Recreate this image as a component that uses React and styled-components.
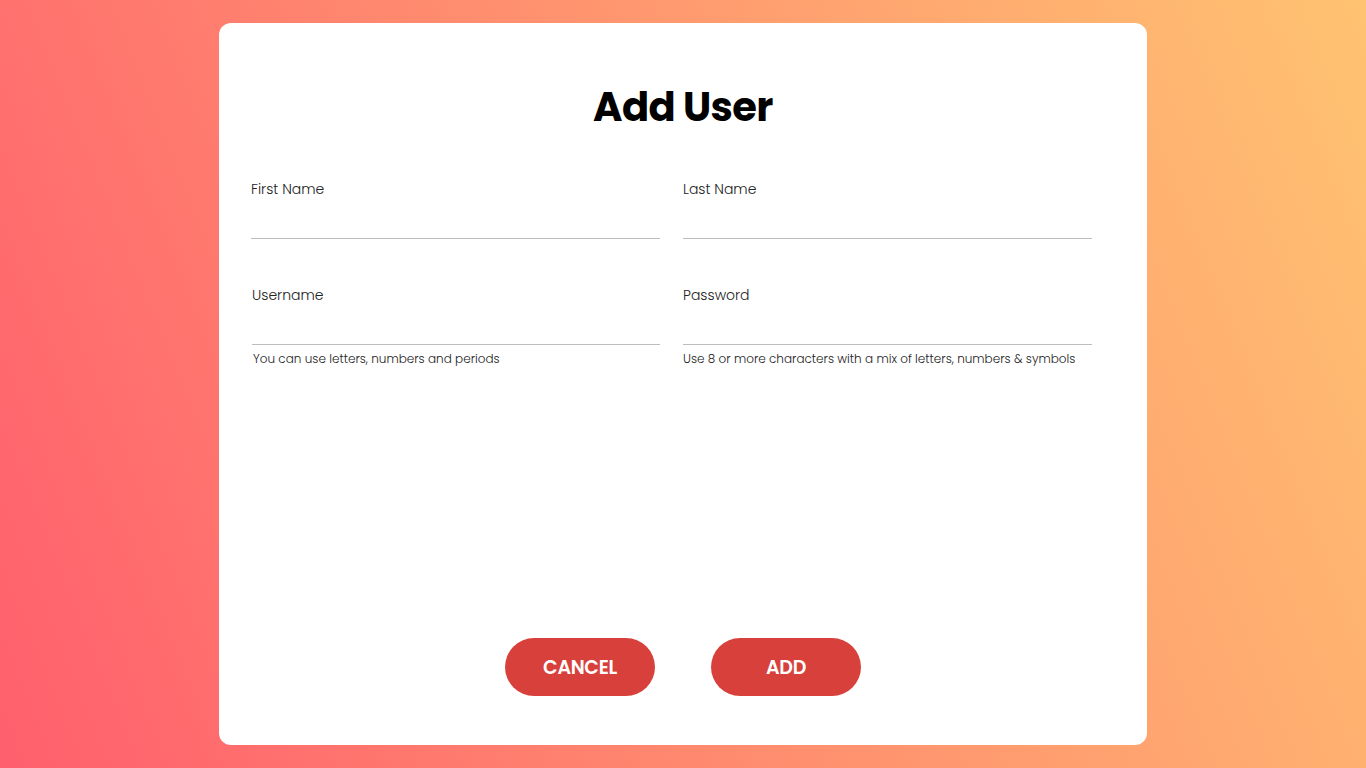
import React from 'react';
import styled, { createGlobalStyle } from 'styled-components';

const GlobalStyle = createGlobalStyle`
  html, body {
    margin: 0;
    padding: 0;
    height: 100%;
  }
  body {
    font-family: "Poppins", "Open Sans", "Noto Sans", sans-serif;
  }
`;

const Page = styled.div`
  width: 100vw;
  height: 100vh;
  box-sizing: border-box;
  padding: 23px 0;
  display: flex;
  justify-content: center;
  background: linear-gradient(68deg, #ff5f6d 0%, #ffc371 100%);
`;

const Card = styled.form`
  width: 928px;
  box-sizing: border-box;
  background: #fff;
  border-radius: 12px;
  padding: 54px 32px 49px;
  display: flex;
  flex-direction: column;
`;

const Title = styled.h1`
  margin: 0 0 42px;
  text-align: center;
  font-size: 40px;
  line-height: 60px;
  font-weight: 700;
  color: #000;
  letter-spacing: -0.6px;
`;

const Fields = styled.div`
  display: grid;
  grid-template-columns: 409px 409px;
  column-gap: 23px;
  row-gap: 46px;
`;

const Field = styled.label`
  display: flex;
  flex-direction: column;
  margin-left: ${(p) => p.$shift || 0}px;
`;

const Label = styled.span`
  font-size: 14px;
  font-weight: 300;
  color: #222;
  line-height: 20px;
`;

const Input = styled.input`
  border: 0;
  border-bottom: 1px solid #bdbdbd;
  outline: none;
  background: none;
  height: 39px;
  padding: 0;
  font: inherit;
`;

const Hint = styled.span`
  margin-top: 8px;
  padding-left: ${(p) => p.$indent || 0}px;
  font-size: 12px;
  font-weight: 300;
  color: #222;
  line-height: 12px;
`;

const Actions = styled.div`
  margin-top: auto;
  display: flex;
  justify-content: center;
  gap: 56px;
`;

const Button = styled.button`
  width: 150px;
  height: 58px;
  border: 0;
  border-radius: 29px;
  background: #d8413b;
  color: #fff;
  font-family: inherit;
  font-size: 19px;
  font-weight: 600;
  letter-spacing: -0.3px;
  cursor: pointer;
`;

export default function App() {
  return (
    <>
      <GlobalStyle />
      <Page>
        <Card onSubmit={(e) => e.preventDefault()}>
          <Title>Add User</Title>
          <Fields>
            <Field>
              <Label>First Name</Label>
              <Input type="text" />
            </Field>
            <Field>
              <Label>Last Name</Label>
              <Input type="text" />
            </Field>
            <Field $shift={1}>
              <Label>Username</Label>
              <Input type="text" />
              <Hint $indent={1}>You can use letters, numbers and periods</Hint>
            </Field>
            <Field>
              <Label>Password</Label>
              <Input type="password" />
              <Hint>Use 8 or more characters with a mix of letters, numbers &amp; symbols</Hint>
            </Field>
          </Fields>
          <Actions>
            <Button type="button">CANCEL</Button>
            <Button type="submit">ADD</Button>
          </Actions>
        </Card>
      </Page>
    </>
  );
}
